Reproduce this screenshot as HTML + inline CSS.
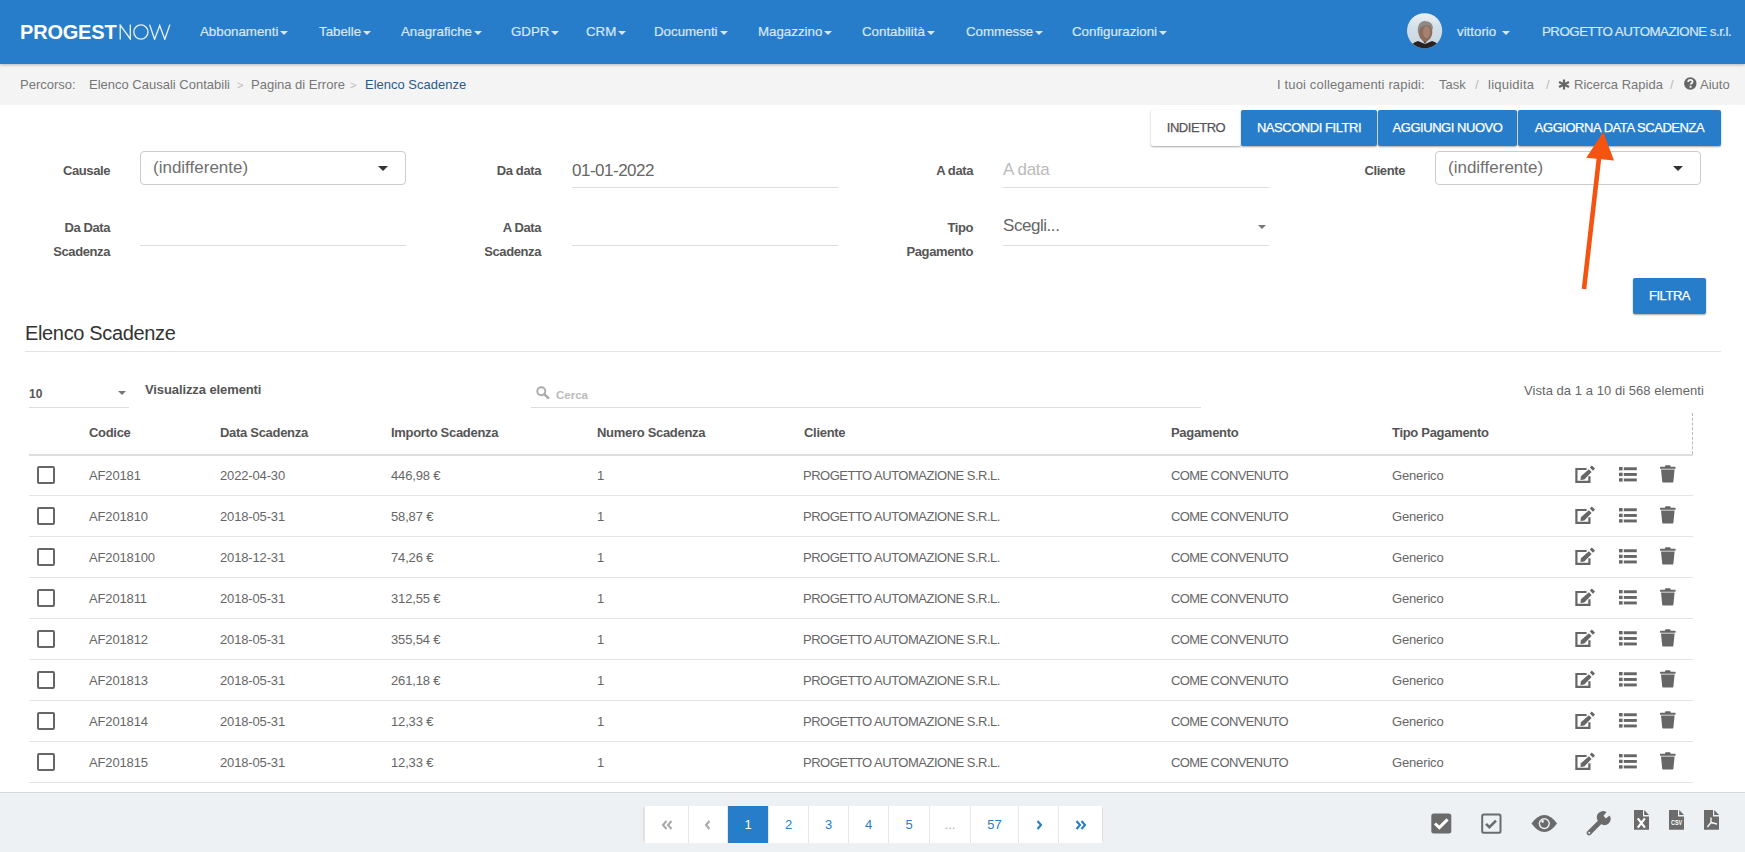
<!DOCTYPE html>
<html><head><meta charset="utf-8">
<style>
*{box-sizing:border-box;margin:0;padding:0}
html,body{width:1745px;height:852px;overflow:hidden;background:#fff;font-family:"Liberation Sans",sans-serif;color:#666}
.abs{position:absolute;white-space:nowrap}
#nav{position:absolute;left:0;top:0;width:1745px;height:64px;background:#277dca;box-shadow:0 1px 3px rgba(0,0,0,.25);z-index:2}
#nav .it{position:absolute;top:24px;font-size:13.3px;color:#d8e8f8;line-height:16px;-webkit-text-stroke:0.2px #d8e8f8}
.car{display:inline-block;width:0;height:0;border-left:4px solid transparent;border-right:4px solid transparent;border-top:4.5px solid #d8e8f8;vertical-align:middle;margin-left:2px;position:relative;top:1px}
#bc{position:absolute;left:0;top:64px;width:1745px;height:41px;background:#f4f4f4}
#bc .t{position:absolute;top:13px;font-size:13px;line-height:16px;color:#777}
.btn{position:absolute;top:110px;height:36px;font-size:13px;line-height:36px;text-align:center;color:#fff;background:#277dca;box-shadow:0 1px 2px rgba(0,0,0,.35);border-radius:2px;letter-spacing:-0.45px;-webkit-text-stroke:0.25px}
.lbl{position:absolute;font-size:13px;font-weight:bold;color:#555;text-align:right;line-height:23.5px;letter-spacing:-0.4px;margin-top:1px}
.inp{position:absolute;border-bottom:1px solid #ddd}
.sel{position:absolute;border:1px solid #ccc;border-radius:4px;background:#fff}
.th{position:absolute;top:425px;font-size:13px;font-weight:bold;color:#555;line-height:16px;letter-spacing:-0.3px}
.row{position:absolute;left:29px;width:1664px;height:41px;border-bottom:1px solid #e4e4e4}
.row .c{position:absolute;top:13px;letter-spacing:-0.15px;font-size:13px;line-height:16px;color:#666}
.pc{position:absolute;top:806px;height:37px;line-height:37px;text-align:center;font-size:13px;border-left:1px solid #e6e6e6}
.cb{position:absolute;left:8px;top:10.5px;width:18px;height:18px;border:2px solid #666;border-radius:2px}
</style></head>
<body>
<svg width="0" height="0" style="position:absolute">
<defs>
<g id="i-edit" fill="#666">
<path d="M11.6 4H1.4V16.8H14.4V11.2" fill="none" stroke="#666" stroke-width="2.2"/>
<path d="M5.9 11.2L13.9 4.2L16.6 6.9L9.6 14.2Q8.2 15 5.5 15Z"/>
<path d="M14.8 2.4L16.8 0.5L20 3.6L18 5.7Z"/>
</g>
<g id="i-list" fill="#666">
<rect x="0" y="0" width="3.6" height="3.4"/><rect x="4.8" y="0.3" width="13" height="2.9"/>
<rect x="0" y="5.7" width="3.6" height="3.4"/><rect x="4.8" y="6" width="13" height="2.9"/>
<rect x="0" y="11.2" width="3.6" height="3.4"/><rect x="4.8" y="11.5" width="13" height="2.9"/>
</g>
<g id="i-trash" fill="#666">
<path d="M5 2V1.2Q5 0.2 6 0.2H9.6Q10.6 0.2 10.6 1.2V2Z"/>
<rect x="0" y="1.8" width="15.6" height="2" rx="0.6"/>
<path d="M1 4.6H14.6L13.4 16.4Q13.3 17.6 12 17.6H3.6Q2.3 17.6 2.2 16.4Z"/>
</g>
</defs></svg>
<div id="nav">
  <div class="abs" style="left:20px;top:22px;font-size:20px;line-height:20px;color:#fff"><b style="letter-spacing:-0.2px">PROGEST</b></div><svg class="abs" style="left:119px;top:24px" width="52" height="16" viewBox="0 0 52 16"><g fill="none" stroke="rgba(255,255,255,.88)" stroke-width="1.35"><path d="M1.2 15.6V1L11.3 15V0.6"/><circle cx="21.9" cy="8" r="7.1"/><path d="M30.6 0.6L35.6 15.3L40.7 1.6L45.8 15.3L50.9 0.6"/></g></svg>
  <div class="it" style="left:200px">Abbonamenti<span class="car"></span></div>
  <div class="it" style="left:319px">Tabelle<span class="car"></span></div>
  <div class="it" style="left:401px">Anagrafiche<span class="car"></span></div>
  <div class="it" style="left:511px">GDPR<span class="car"></span></div>
  <div class="it" style="left:586px">CRM<span class="car"></span></div>
  <div class="it" style="left:654px">Documenti<span class="car"></span></div>
  <div class="it" style="left:758px">Magazzino<span class="car"></span></div>
  <div class="it" style="left:862px">Contabilità<span class="car"></span></div>
  <div class="it" style="left:966px">Commesse<span class="car"></span></div>
  <div class="it" style="left:1072px">Configurazioni<span class="car"></span></div>
  <svg class="abs" style="left:1407px;top:13px" width="36" height="36" viewBox="0 0 36 36"><defs><clipPath id="av"><circle cx="17.6" cy="17.8" r="17.6"/></clipPath><linearGradient id="sky" x1="0" y1="0" x2="0" y2="1"><stop offset="0" stop-color="#eef0f2"/><stop offset=".4" stop-color="#d3e0e9"/><stop offset="1" stop-color="#c9d5dd"/></linearGradient><filter id="bl" x="-10%" y="-10%" width="120%" height="120%"><feGaussianBlur stdDeviation="0.7"/></filter></defs><g clip-path="url(#av)"><rect width="36" height="36" fill="url(#sky)"/><g filter="url(#bl)"><path d="M2 37Q4 30 11 28L18 31L25 28Q32 30 34 37Z" fill="#2c2220"/><path d="M14 25L18 31L22 25Z" fill="#6a4a3c"/><ellipse cx="18.4" cy="18.8" rx="7" ry="9.6" fill="#8d6d5d"/><ellipse cx="19.5" cy="19" rx="3.5" ry="6" fill="#a48270"/><path d="M11 21Q9.6 8.5 18 8Q26.6 8.3 26 17Q24 12 18.5 12.2Q13 12.5 11 21Z" fill="#8f8a85"/></g></g></svg>
  <div class="it" style="left:1457px">vittorio <span class="car"></span></div>
  <div class="it" style="left:1542px;letter-spacing:-0.5px">PROGETTO AUTOMAZIONE s.r.l.</div>
</div>
<div id="bc">
  <div class="t" style="left:20px">Percorso:</div>
  <div class="t" style="left:89px">Elenco Causali Contabili</div>
  <div class="t" style="left:237px;color:#bbb;font-size:11px">&gt;</div>
  <div class="t" style="left:251px">Pagina di Errore</div>
  <div class="t" style="left:350px;color:#bbb;font-size:11px">&gt;</div>
  <div class="t" style="left:365px;color:#2b5a8a">Elenco Scadenze</div>
  <div class="t" style="left:1277px;letter-spacing:0.15px">I tuoi collegamenti rapidi:</div>
  <div class="t" style="left:1439px">Task</div>
  <div class="t" style="left:1475px;color:#bbb">/</div>
  <div class="t" style="left:1488px;letter-spacing:0.25px">liquidita</div>
  <div class="t" style="left:1546px;color:#bbb">/</div>
  <svg class="abs" style="left:1558px;top:15px" width="12" height="11" viewBox="0 0 12 11"><path d="M6 0.5V10.5M1 3L11 8M11 3L1 8" stroke="#666" stroke-width="2.2"/></svg><div class="t" style="left:1574px">Ricerca Rapida</div>
  <div class="t" style="left:1670px;color:#bbb">/</div>
  <svg class="abs" style="left:1684px;top:13px" width="13" height="13" viewBox="0 0 13 13"><circle cx="6.3" cy="6.5" r="6.2" fill="#666"/><path d="M4.2 5Q4.2 2.8 6.4 2.8Q8.5 2.8 8.5 4.7Q8.5 5.8 7.3 6.4Q6.7 6.8 6.7 7.6" fill="none" stroke="#f4f4f4" stroke-width="1.8"/><rect x="5.6" y="8.8" width="2" height="1.9" fill="#f4f4f4"/></svg><div class="t" style="left:1700px">Aiuto</div>
</div>

<div class="btn" style="left:1151px;width:90px;background:#fff;color:#555">INDIETRO</div>
<div class="btn" style="left:1241px;width:136px">NASCONDI FILTRI</div>
<div class="btn" style="left:1378px;width:139px">AGGIUNGI NUOVO</div>
<div class="btn" style="left:1518px;width:203px">AGGIORNA DATA SCADENZA</div>

<!-- form -->
<div class="lbl" style="left:20px;width:90px;top:158px">Causale</div>
<div class="sel" style="left:140px;top:151px;width:266px;height:34px"><span class="abs" style="left:12px;top:7px;font-size:17px;line-height:18px;color:#707070">(indifferente)</span><span class="abs" style="left:237px;top:14px;border-left:5px solid transparent;border-right:5px solid transparent;border-top:5px solid #333"></span></div>

<div class="lbl" style="left:440px;width:101px;top:158px">Da data</div>
<div class="inp" style="left:572px;top:150px;width:266px;height:38px"><span class="abs" style="left:0;top:12px;font-size:17px;line-height:18px;color:#666;letter-spacing:-0.5px">01-01-2022</span></div>

<div class="lbl" style="left:870px;width:103px;top:158px">A data</div>
<div class="inp" style="left:1003px;top:150px;width:266px;height:38px"><span class="abs" style="left:0;top:11px;font-size:17px;line-height:18px;color:#bbb;letter-spacing:-0.3px">A data</span></div>

<div class="lbl" style="left:1300px;width:105px;top:158px">Cliente</div>
<div class="sel" style="left:1435px;top:151px;width:266px;height:34px"><span class="abs" style="left:12px;top:7px;font-size:17px;line-height:18px;color:#707070">(indifferente)</span><span class="abs" style="left:237px;top:14px;border-left:5px solid transparent;border-right:5px solid transparent;border-top:5px solid #333"></span></div>

<div class="lbl" style="left:20px;width:90px;top:215px">Da Data<br>Scadenza</div>
<div class="inp" style="left:140px;top:200px;width:266px;height:46px"></div>
<div class="lbl" style="left:440px;width:101px;top:215px">A Data<br>Scadenza</div>
<div class="inp" style="left:572px;top:200px;width:266px;height:46px"></div>
<div class="lbl" style="left:870px;width:103px;top:215px">Tipo<br>Pagamento</div>
<div class="inp" style="left:1003px;top:200px;width:266px;height:46px"><span class="abs" style="left:0;top:17px;font-size:17px;line-height:18px;color:#666;letter-spacing:-0.45px">Scegli...</span><span class="abs" style="left:255px;top:25px;border-left:4px solid transparent;border-right:4px solid transparent;border-top:4px solid #777"></span></div>

<div class="btn" style="left:1633px;top:278px;width:73px;height:36px">FILTRA</div>

<!-- arrow -->
<svg class="abs" style="left:0;top:0;z-index:5" width="1745" height="852"><line x1="1584" y1="289" x2="1599" y2="158" stroke="#f4540f" stroke-width="4.6"/><polygon points="1603.3,132 1586.2,157.8 1614,160.6" fill="#f4540f"/></svg>

<div class="abs" style="left:25px;top:322px;font-size:20px;line-height:22px;color:#333;letter-spacing:-0.35px">Elenco Scadenze</div>
<div class="abs" style="left:25px;top:351px;width:1696px;height:1px;background:#e4e4e4"></div>

<!-- table controls -->
<div class="abs" style="left:29px;top:387px;font-size:12px;font-weight:bold;color:#555;line-height:14px">10</div>
<div class="abs" style="left:118px;top:391px;border-left:4px solid transparent;border-right:4px solid transparent;border-top:4px solid #777"></div>
<div class="abs" style="left:29px;top:407px;width:100px;height:1px;background:#ddd"></div>
<div class="abs" style="left:145px;top:382px;font-size:13px;font-weight:bold;color:#555;line-height:16px;letter-spacing:-0.1px">Visualizza elementi</div>
<div class="abs" style="left:531px;top:407px;width:670px;height:1px;background:#ddd"></div>
<svg class="abs" style="left:536px;top:386px" width="14" height="13" viewBox="0 0 14 13"><circle cx="5.3" cy="5.3" r="4" fill="none" stroke="#aaa" stroke-width="1.9"/><path d="M8.2 8.2L12.3 12" stroke="#aaa" stroke-width="2.4" stroke-linecap="round"/></svg><div class="abs" style="left:556px;top:389px;font-size:11.5px;font-weight:bold;color:#bbb;line-height:13px">Cerca</div>
<div class="abs" style="left:1524px;top:383px;font-size:13px;color:#666;line-height:16px;letter-spacing:0.05px">Vista da 1 a 10 di 568 elementi</div>

<!-- table header -->
<div class="th" style="left:89px">Codice</div>
<div class="th" style="left:220px">Data Scadenza</div>
<div class="th" style="left:391px">Importo Scadenza</div>
<div class="th" style="left:597px">Numero Scadenza</div>
<div class="th" style="left:804px">Cliente</div>
<div class="th" style="left:1171px">Pagamento</div>
<div class="th" style="left:1392px">Tipo Pagamento</div>
<div class="abs" style="left:29px;top:454px;width:1664px;height:2px;background:#ddd"></div>
<div class="abs" style="left:1692px;top:413px;width:0;height:41px;border-left:1px dashed #bbb"></div>

<!--ROWS-->
<div class="row" style="top:455px"><div class="cb"></div><div class="c" style="left:60px">AF20181</div><div class="c" style="left:191px">2022-04-30</div><div class="c" style="left:362px">446,98 €</div><div class="c" style="left:568px">1</div><div class="c" style="left:774px;letter-spacing:-0.5px">PROGETTO AUTOMAZIONE S.R.L.</div><div class="c" style="left:1142px;letter-spacing:-0.6px">COME CONVENUTO</div><div class="c" style="left:1363px">Generico</div><svg style="position:absolute;left:1546px;top:10px" width="21" height="18"><use href="#i-edit"/></svg><svg style="position:absolute;left:1590px;top:12px" width="18" height="16"><use href="#i-list"/></svg><svg style="position:absolute;left:1631px;top:10px" width="16" height="18"><use href="#i-trash"/></svg></div>
<div class="row" style="top:496px"><div class="cb"></div><div class="c" style="left:60px">AF201810</div><div class="c" style="left:191px">2018-05-31</div><div class="c" style="left:362px">58,87 €</div><div class="c" style="left:568px">1</div><div class="c" style="left:774px;letter-spacing:-0.5px">PROGETTO AUTOMAZIONE S.R.L.</div><div class="c" style="left:1142px;letter-spacing:-0.6px">COME CONVENUTO</div><div class="c" style="left:1363px">Generico</div><svg style="position:absolute;left:1546px;top:10px" width="21" height="18"><use href="#i-edit"/></svg><svg style="position:absolute;left:1590px;top:12px" width="18" height="16"><use href="#i-list"/></svg><svg style="position:absolute;left:1631px;top:10px" width="16" height="18"><use href="#i-trash"/></svg></div>
<div class="row" style="top:537px"><div class="cb"></div><div class="c" style="left:60px">AF2018100</div><div class="c" style="left:191px">2018-12-31</div><div class="c" style="left:362px">74,26 €</div><div class="c" style="left:568px">1</div><div class="c" style="left:774px;letter-spacing:-0.5px">PROGETTO AUTOMAZIONE S.R.L.</div><div class="c" style="left:1142px;letter-spacing:-0.6px">COME CONVENUTO</div><div class="c" style="left:1363px">Generico</div><svg style="position:absolute;left:1546px;top:10px" width="21" height="18"><use href="#i-edit"/></svg><svg style="position:absolute;left:1590px;top:12px" width="18" height="16"><use href="#i-list"/></svg><svg style="position:absolute;left:1631px;top:10px" width="16" height="18"><use href="#i-trash"/></svg></div>
<div class="row" style="top:578px"><div class="cb"></div><div class="c" style="left:60px">AF201811</div><div class="c" style="left:191px">2018-05-31</div><div class="c" style="left:362px">312,55 €</div><div class="c" style="left:568px">1</div><div class="c" style="left:774px;letter-spacing:-0.5px">PROGETTO AUTOMAZIONE S.R.L.</div><div class="c" style="left:1142px;letter-spacing:-0.6px">COME CONVENUTO</div><div class="c" style="left:1363px">Generico</div><svg style="position:absolute;left:1546px;top:10px" width="21" height="18"><use href="#i-edit"/></svg><svg style="position:absolute;left:1590px;top:12px" width="18" height="16"><use href="#i-list"/></svg><svg style="position:absolute;left:1631px;top:10px" width="16" height="18"><use href="#i-trash"/></svg></div>
<div class="row" style="top:619px"><div class="cb"></div><div class="c" style="left:60px">AF201812</div><div class="c" style="left:191px">2018-05-31</div><div class="c" style="left:362px">355,54 €</div><div class="c" style="left:568px">1</div><div class="c" style="left:774px;letter-spacing:-0.5px">PROGETTO AUTOMAZIONE S.R.L.</div><div class="c" style="left:1142px;letter-spacing:-0.6px">COME CONVENUTO</div><div class="c" style="left:1363px">Generico</div><svg style="position:absolute;left:1546px;top:10px" width="21" height="18"><use href="#i-edit"/></svg><svg style="position:absolute;left:1590px;top:12px" width="18" height="16"><use href="#i-list"/></svg><svg style="position:absolute;left:1631px;top:10px" width="16" height="18"><use href="#i-trash"/></svg></div>
<div class="row" style="top:660px"><div class="cb"></div><div class="c" style="left:60px">AF201813</div><div class="c" style="left:191px">2018-05-31</div><div class="c" style="left:362px">261,18 €</div><div class="c" style="left:568px">1</div><div class="c" style="left:774px;letter-spacing:-0.5px">PROGETTO AUTOMAZIONE S.R.L.</div><div class="c" style="left:1142px;letter-spacing:-0.6px">COME CONVENUTO</div><div class="c" style="left:1363px">Generico</div><svg style="position:absolute;left:1546px;top:10px" width="21" height="18"><use href="#i-edit"/></svg><svg style="position:absolute;left:1590px;top:12px" width="18" height="16"><use href="#i-list"/></svg><svg style="position:absolute;left:1631px;top:10px" width="16" height="18"><use href="#i-trash"/></svg></div>
<div class="row" style="top:701px"><div class="cb"></div><div class="c" style="left:60px">AF201814</div><div class="c" style="left:191px">2018-05-31</div><div class="c" style="left:362px">12,33 €</div><div class="c" style="left:568px">1</div><div class="c" style="left:774px;letter-spacing:-0.5px">PROGETTO AUTOMAZIONE S.R.L.</div><div class="c" style="left:1142px;letter-spacing:-0.6px">COME CONVENUTO</div><div class="c" style="left:1363px">Generico</div><svg style="position:absolute;left:1546px;top:10px" width="21" height="18"><use href="#i-edit"/></svg><svg style="position:absolute;left:1590px;top:12px" width="18" height="16"><use href="#i-list"/></svg><svg style="position:absolute;left:1631px;top:10px" width="16" height="18"><use href="#i-trash"/></svg></div>
<div class="row" style="top:742px"><div class="cb"></div><div class="c" style="left:60px">AF201815</div><div class="c" style="left:191px">2018-05-31</div><div class="c" style="left:362px">12,33 €</div><div class="c" style="left:568px">1</div><div class="c" style="left:774px;letter-spacing:-0.5px">PROGETTO AUTOMAZIONE S.R.L.</div><div class="c" style="left:1142px;letter-spacing:-0.6px">COME CONVENUTO</div><div class="c" style="left:1363px">Generico</div><svg style="position:absolute;left:1546px;top:10px" width="21" height="18"><use href="#i-edit"/></svg><svg style="position:absolute;left:1590px;top:12px" width="18" height="16"><use href="#i-list"/></svg><svg style="position:absolute;left:1631px;top:10px" width="16" height="18"><use href="#i-trash"/></svg></div>
<!--/ROWS-->

<!-- footer -->
<div class="abs" style="left:0;top:792px;width:1745px;height:60px;background:#eef1f4;border-top:1px solid #d8d8d8"></div>
<div class="abs" style="left:643px;top:806px;width:460px;height:37px;background:#fff;border:1px solid #ddd;border-radius:3px"></div>
<div class="pc" style="left:644px;width:44px;background:#fff;color:#aaa"><svg width="12" height="10" viewBox="0 0 12 10" style="vertical-align:middle;position:relative;top:-1px"><path d="M5.5 1L2 5L5.5 9M10.5 1L7 5L10.5 9" fill="none" stroke="#aaa" stroke-width="2.1"/></svg></div>
<div class="pc" style="left:688px;width:39px;background:#fff;color:#aaa"><svg width="12" height="10" viewBox="0 0 12 10" style="vertical-align:middle;position:relative;top:-1px"><path d="M7.5 1L4 5L7.5 9" fill="none" stroke="#aaa" stroke-width="2.1"/></svg></div>
<div class="pc" style="left:727px;width:41px;background:#277dca;color:#fff">1</div>
<div class="pc" style="left:768px;width:40px;background:#fff;color:#277dca">2</div>
<div class="pc" style="left:808px;width:40px;background:#fff;color:#277dca">3</div>
<div class="pc" style="left:848px;width:40px;background:#fff;color:#277dca">4</div>
<div class="pc" style="left:888px;width:41px;background:#fff;color:#277dca">5</div>
<div class="pc" style="left:929px;width:41px;background:#fff;color:#aaa">...</div>
<div class="pc" style="left:970px;width:48px;background:#fff;color:#277dca">57</div>
<div class="pc" style="left:1018px;width:40px;background:#fff;color:#277dca"><svg width="12" height="10" viewBox="0 0 12 10" style="vertical-align:middle;position:relative;top:-1px"><path d="M4.5 1L8 5L4.5 9" fill="none" stroke="#277dca" stroke-width="2.1"/></svg></div>
<div class="pc" style="left:1058px;width:44px;background:#fff;color:#277dca"><svg width="12" height="10" viewBox="0 0 12 10" style="vertical-align:middle;position:relative;top:-1px"><path d="M1.5 1L5 5L1.5 9M6.5 1L10 5L6.5 9" fill="none" stroke="#277dca" stroke-width="2.1"/></svg></div>
<svg class="abs" style="left:1431px;top:813px" width="21" height="21" viewBox="0 0 21 21"><rect x="0.3" y="0.5" width="20" height="20" rx="2.5" fill="#6b6b6b"/><path d="M4 10.5L8.3 14.6L16.6 6.4" fill="none" stroke="#fff" stroke-width="3"/></svg>
<svg class="abs" style="left:1481px;top:813px" width="21" height="21" viewBox="0 0 21 21"><rect x="1.2" y="1.4" width="18.3" height="18.3" rx="1.5" fill="none" stroke="#6b6b6b" stroke-width="2"/><path d="M5 10.8L8.4 14.2L15 7.6" fill="none" stroke="#6b6b6b" stroke-width="2.6"/></svg>
<svg class="abs" style="left:1531px;top:814px" width="27" height="19" viewBox="0 0 27 19"><path d="M0.5 9.5Q6.5 1 13.3 1Q20 1 26 9.5Q20 18 13.3 18Q6.5 18 0.5 9.5Z" fill="#6b6b6b"/><circle cx="13.3" cy="9.6" r="5.6" fill="#eef1f4"/><circle cx="13.3" cy="9.6" r="4.2" fill="#6b6b6b"/><circle cx="11.6" cy="7.4" r="1.3" fill="#eef1f4"/></svg>
<svg class="abs" style="left:1586px;top:811px" width="25" height="25" viewBox="0 0 25 25"><path d="M3 22L13.5 11.5" stroke="#6b6b6b" stroke-width="4.6" stroke-linecap="round"/><path d="M13.5 11.5A6 6 0 0 1 20.5 1.2L17.5 4.8L19.8 7.4L23.6 4.4A6 6 0 0 1 13.5 11.5Z" fill="#6b6b6b"/><circle cx="3.2" cy="21.8" r="1" fill="#eef1f4"/></svg>
<svg class="abs" style="left:1634px;top:810px" width="16" height="20" viewBox="0 0 16 20"><path d="M0 0H9V6.5H15V19.8H0Z" fill="#6b6b6b"/><path d="M10.2 0L15 4.9H10.2Z" fill="#6b6b6b"/><path d="M3.8 8.3L10.9 17.6M10.9 8.3L3.8 17.6" stroke="#fff" stroke-width="2.2"/></svg>
<svg class="abs" style="left:1669px;top:810px" width="16" height="20" viewBox="0 0 16 20"><path d="M0 0H9V6.5H15V19.8H0Z" fill="#6b6b6b"/><path d="M10.2 0L15 4.9H10.2Z" fill="#6b6b6b"/><text x="0" y="0" text-anchor="middle" font-family="Liberation Sans" font-weight="bold" font-size="6.2" fill="#fff" transform="translate(7.6,15.1) scale(0.88,1.15)">CSV</text></svg>
<svg class="abs" style="left:1704px;top:810px" width="16" height="20" viewBox="0 0 16 20"><path d="M0 0H9V6.5H15V19.8H0Z" fill="#6b6b6b"/><path d="M10.2 0L15 4.9H10.2Z" fill="#6b6b6b"/><path d="M7 7.5V12.5L3.5 17M7 12.5L13 14" fill="none" stroke="#fff" stroke-width="1.3"/></svg>
</body></html>
